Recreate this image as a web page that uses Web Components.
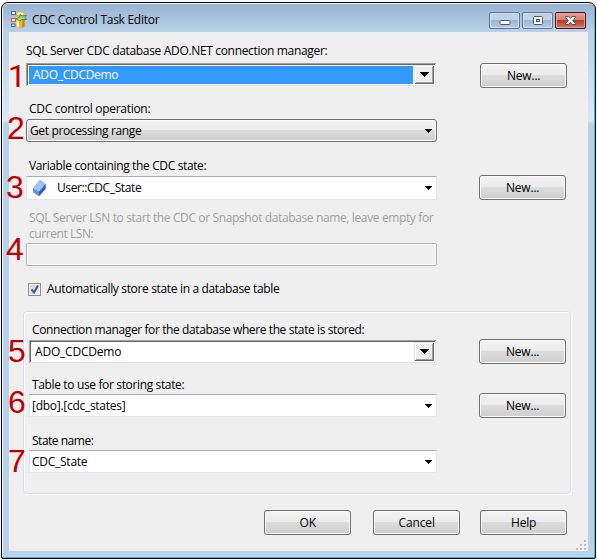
<!DOCTYPE html>
<html lang="en"><head><meta charset="utf-8"><title>CDC Control Task Editor</title>
<style>
html,body{margin:0;width:597px;height:560px;overflow:hidden;background:#f7f9fa;font:12px "Open Sans","Noto Sans",sans-serif;color:#000}
</style></head><body>
<cdc-window></cdc-window>
<script>
// Text run whose spacing is adjusted to occupy a given width
customElements.define('ui-text', class extends HTMLElement{
  connectedCallback(){
    const w=+this.getAttribute('w');
    this.attachShadow({mode:'open'}).innerHTML=`<style>:host{display:block;width:${w}px;height:16px;line-height:16px;white-space:nowrap;flex:none}span{display:inline-block;font-size:12px}</style><span></span>`;
    const s=this.shadowRoot.querySelector('span'), t=this.getAttribute('text');
    s.textContent=t;
    const nat=s.getBoundingClientRect().width;
    s.style.letterSpacing=((w+.3-nat)/t.length)+'px';
  }
});
customElements.define('ui-button', class extends HTMLElement{
  connectedCallback(){
    this.attachShadow({mode:'open'}).innerHTML=`<style>
    :host{display:flex;box-sizing:border-box;width:87px;height:25px;border:1px solid #707070;border-radius:3px;box-shadow:inset 0 0 0 1px #fafafa;background:linear-gradient(#f3f3f3 0,#ebebeb 48%,#dcdcdc 50%,#cecece 100%);align-items:center;justify-content:center;flex:none}
    </style><ui-text text="${this.getAttribute('text')}" w="${this.getAttribute('w')}"></ui-text>`;
  }
});
customElements.define('ui-combo', class extends HTMLElement{
  connectedCallback(){
    const k=this.getAttribute('kind');
    this.attachShadow({mode:'open'}).innerHTML=`<style>
    :host{display:flex;box-sizing:border-box;height:23px;align-items:center;flex:none;background:#fff;border:1px solid #e3e5ec;border-top-color:#abadb3;border-radius:1px}
    :host([kind=classic]){border:0;border-radius:0;background:#fff;box-shadow:inset 1px 1px #a0a0a0,inset -1px -1px #e3e3e3,inset 2px 2px #696969,inset -2px -2px #fff;padding:3px 2px 2px 3px;align-items:stretch}
    :host([kind=button]){border:1px solid #707070;border-radius:3px;box-shadow:inset 0 0 0 1px #fafafa;background:linear-gradient(#f3f3f3 0,#ebebeb 48%,#dcdcdc 50%,#cecece 100%)}
    :host([kind=disabled]){border:1px solid #afafaf;border-radius:2px;box-shadow:inset 0 0 0 1px #fff;background:#efefef}
    .v{flex:1;display:flex;align-items:center}
    :host([selected]) .v{background:#39f;color:#fff;padding-bottom:1px}
    .a{display:flex;align-items:center;justify-content:center;width:16px}
    :host([kind=classic]) .a{box-sizing:border-box;width:20px;background:#efefef;box-shadow:inset 1px 1px #e3e3e3,inset -1px -1px #696969,inset 2px 2px #fff,inset -2px -2px #a0a0a0;margin:-1px 0 0 1px}
    svg{display:block}
    </style><div class="v"><slot></slot></div>${k==='disabled'?'':`<div class="a">${k==='classic'?'<svg width="9" height="5" shape-rendering="crispEdges"><path d="M0 0h9v1h-1v1h-1v1h-1v1h-1v1h-1v-1h-1v-1h-1v-1h-1v-1h-1z"/></svg>':'<svg width="7" height="4" shape-rendering="crispEdges"><path d="M0 0h7v1h-1v1h-1v1h-1v1h-1v-1h-1v-1h-1v-1h-1z"/></svg>'}</div>`}`;
  }
});
customElements.define('step-number', class extends HTMLElement{
  connectedCallback(){
    this.attachShadow({mode:'open'}).innerHTML=`<style>:host{position:absolute;z-index:2;font:32px/31px "Liberation Sans",Arial,sans-serif;color:#c00000}:host([plain]){font-family:Roboto,sans-serif}</style><slot></slot>`;
  }
});
customElements.define('title-bar', class extends HTMLElement{
  connectedCallback(){
    this.attachShadow({mode:'open'}).innerHTML=`<style>
    :host{display:flex;height:28px;box-sizing:border-box;padding:0 8px 0 7px;align-items:flex-start;background:linear-gradient(#98b3d1,#b9d1ea);border-radius:4px 4px 0 0}
    .i{margin:7px 5px 0 1px;width:16px;height:17px;flex:none}
    ui-text{margin-top:8px}
    .c{margin-left:auto;margin-top:8px;display:flex;gap:2px}
    .b{box-sizing:border-box;width:31px;height:17px;border:1px solid #5f7596;border-radius:2px;box-shadow:inset 0 0 0 1px #cfdfef;background:linear-gradient(#bfd3e8 0 46%,#9bb7d4 50%,#b4cde5);display:flex;align-items:center;justify-content:center}
    .x{border-color:#4c1422;box-shadow:inset 0 0 0 1px #dda59d;background:linear-gradient(#e5a295,#d77f70 46%,#b93a25 50%,#d27a63)}
    </style>
    <svg class="i" viewBox="0 0 16 17">
      <path d="M5 4v11.500c1.500 1.600 7 1.600 8.500 0V4z" fill="#f0b52b"/><path d="M8 6v10.500L5.500 15.500V6z" fill="#fff1a0"/><path d="M11.500 5h2v10.500l-2 1z" fill="#c57d14"/>
      <ellipse cx="9.200" cy="2.800" rx="4.200" ry="2" fill="#fff0a8" stroke="#c59736" stroke-width=".6"/>
      <path d="M5 8l4-2.500V3.500l2 1.500 4.500-.5-1.500 2 1.500 2h-5L9 10z" fill="#9fd08c" stroke="#3f8046" stroke-width=".8"/>
      <g fill="#f7faff" stroke-width="1"><rect x=".5" y=".5" width="4" height="3" stroke="#4564a1"/><rect x=".5" y="7.500" width="4" height="3" stroke="#e65c20"/><rect x=".5" y="13" width="3.500" height="2.500" stroke="#4564a1"/></g>
    </svg>
    <ui-text text="CDC Control Task Editor" w="127"></ui-text>
    <div class="c"><div class="b"><svg width="12" height="11"><rect x="1" y="5.500" width="10" height="4" rx="1" fill="#fff" stroke="#505a6e"/></svg></div>
    <div class="b"><svg width="12" height="11"><rect x="1.500" y="1.500" width="9" height="8" rx="1" fill="#fff" stroke="#505a6e"/><rect x="4.500" y="4.500" width="3" height="2" fill="#9bb7d4" stroke="#505a6e"/></svg></div>
    <div class="b x"><svg width="13" height="11"><path d="M1.500 1.500h3.200L6.500 3.500l1.800-2h3.200v1L8.700 5.500l2.800 3v1H8.300l-1.800-2-1.800 2H1.500v-1l2.800-3-2.800-3z" fill="#fff" stroke="#505060"/></svg></div></div>`;
  }
});
// Label above a row holding a combo box and an optional button
customElements.define('form-field', class extends HTMLElement{
  connectedCallback(){
    this.attachShadow({mode:'open'}).innerHTML=`<style>
    :host{display:flex;flex-direction:column;box-sizing:border-box}
    .l{color:var(--label,#000);padding-left:var(--indent,3px);margin-bottom:var(--gap,2px)}
    .r{display:flex;height:25px}
    ::slotted(ui-button){margin-left:auto!important}
    </style><div class="l"><slot name="label"></slot></div><div class="r"><slot></slot></div>`;
  }
});
customElements.define('cdc-window', class extends HTMLElement{
  connectedCallback(){
    this.attachShadow({mode:'open'}).innerHTML=`<style>
    :host{display:block;box-sizing:border-box;position:relative;margin:2px 1px 1px;width:595px;height:557px;border:1px solid #000;border-radius:7px 7px 2px 2px;background:#b9d1ea;overflow:hidden;box-shadow:inset -1px -1px #35c3df,inset 1px 1px #edf6fc}
    title-bar{margin:1px 1px 0}
    .side{height:519px;padding:0 6px 6px 7px;background:linear-gradient(#b9d1ea,#dce8f5 88px,#b9d1ea 92px);margin:0 1px}
    main{display:flex;flex-direction:column;box-sizing:border-box;height:519px;background:#efefef;margin-left:-1px;padding:0 0 0 17px;width:579px}
    form-field{width:541px}
    .n1{--indent:0px;--gap:4px;margin-top:11px}
    .n2{margin-top:13px}.n3{width:540px;margin-top:14px;--gap:1px}.n4{--label:#9f9f9f;margin-top:10px;--gap:2px}
    .two{display:flex;flex-direction:column;height:31px}
    .two ui-text{height:15.5px;line-height:15.5px}
    .check{display:flex;align-items:center;height:16px;margin:13px 0 0 2px;gap:6px}
    .box{box-sizing:border-box;width:13px;height:13px;border:1px solid #8e8f8f;background:linear-gradient(135deg,#cbd0d6,#f7f7f7);box-shadow:inset 0 0 0 1px #f4f4f4;flex:none}
    fieldset{box-sizing:border-box;width:548px;height:183px;margin:14px 0 0 -3px;padding:11px 5px 0 5px;border:1px solid #d5dfe5;border-radius:4px;box-shadow:inset 1px 1px #fff,1px 1px #fff;min-width:0}
    fieldset form-field{width:537px;--gap:0px}
    .n5{margin-top:-1px}fieldset .n5{--gap:1px}
    .n6{margin-top:13px}.n7{margin-top:15px}
    footer{display:flex;padding-left:238px;margin-top:16px}
    .grip{display:grid;grid-template-columns:repeat(3,2px);gap:2px;justify-content:end;margin:5px 2px 0 0;height:10px}.grip i{height:2px;background:#bdbdbd;box-shadow:1px 1px #fff}
    .grip i.e{visibility:hidden}
    </style>
    <title-bar></title-bar>
    <div class="side"><main>
      <form-field class="n1"><ui-text slot="label" w="301" text="SQL Server CDC database ADO.NET connection manager:"></ui-text><ui-combo kind="classic" selected style="width:410px"><ui-text w="85" text="ADO_CDCDemo" style="margin-left:4px"></ui-text></ui-combo><ui-button text="New..." w="33"></ui-button></form-field>
      <form-field class="n2"><ui-text slot="label" w="121" text="CDC control operation:"></ui-text><ui-combo kind="button" style="width:411px"><ui-text w="111" text="Get processing range" style="margin-left:3px"></ui-text></ui-combo></form-field>
      <form-field class="n3"><ui-text slot="label" w="177" text="Variable containing the CDC state:"></ui-text><ui-combo style="width:411px;height:24px;margin-top:1px"><svg width="15" height="18" viewBox="0 0 15 18" style="margin-left:5px;flex:none"><path d="M1 9.500L8 1l5.500 4v5L7 17l-6-4z" fill="#3d75c7"/><path d="M1 9.500L8 1l5.500 4L7 13z" fill="#9cc5f3"/><path d="M7 13l6.500-8v5L7 17z" fill="#2f5fc4"/><path d="M1 9.500L7 13v4l-6-4z" fill="#6793c8"/></svg><ui-text w="84" text="User::CDC_State" style="margin-left:10px"></ui-text></ui-combo><ui-button text="New..." w="33"></ui-button></form-field>
      <form-field class="n4"><div class="two" slot="label"><ui-text w="404" text="SQL Server LSN to start the CDC or Snapshot database name, leave empty for"></ui-text><ui-text w="64" text="current LSN:"></ui-text></div><ui-combo kind="disabled" style="width:411px"></ui-combo></form-field>
      <div class="check"><div class="box"><svg width="11" height="11" style="display:block"><path d="M2.500 5.500l2.500 3 4-7" fill="none" stroke="#40558f" stroke-width="2"/></svg></div><ui-text w="232" text="Automatically store state in a database table"></ui-text></div>
      <fieldset>
        <form-field class="n5"><ui-text slot="label" w="332" text="Connection manager for the database where the state is stored:"></ui-text><ui-combo kind="classic" style="width:407px;margin-top:1px"><ui-text w="86" text="ADO_CDCDemo" style="margin-left:3px"></ui-text></ui-combo><ui-button text="New..." w="33"></ui-button></form-field>
        <form-field class="n6"><ui-text slot="label" w="152" text="Table to use for storing state:"></ui-text><ui-combo style="width:408px;margin-top:1px"><ui-text w="93" text="[dbo].[cdc_states]" style="margin-left:2px"></ui-text></ui-combo><ui-button text="New..." w="33"></ui-button></form-field>
        <form-field class="n7"><ui-text slot="label" w="61" text="State name:"></ui-text><ui-combo style="width:408px;margin-top:1px"><ui-text w="55" text="CDC_State" style="margin-left:2px"></ui-text></ui-combo></form-field>
      </fieldset>
      <footer><ui-button text="OK" w="16"></ui-button><ui-button text="Cancel" w="36" style="margin-left:22px"></ui-button><ui-button text="Help" w="25" style="margin-left:20px"></ui-button></footer>
      <div class="grip"><i class="e"></i><i class="e"></i><i></i><i class="e"></i><i></i><i></i><i></i><i></i><i></i></div>
    </main></div>
    ${[[6,58],[5,110],[4,169],[4,231],[6,333],[6,384],[6,443]].map(([x,y],i)=>`<step-number ${i?'':'plain'} style="left:${x}px;top:${y}px">${i+1}</step-number>`).join('')}`;
  }
});
</script></body></html>
